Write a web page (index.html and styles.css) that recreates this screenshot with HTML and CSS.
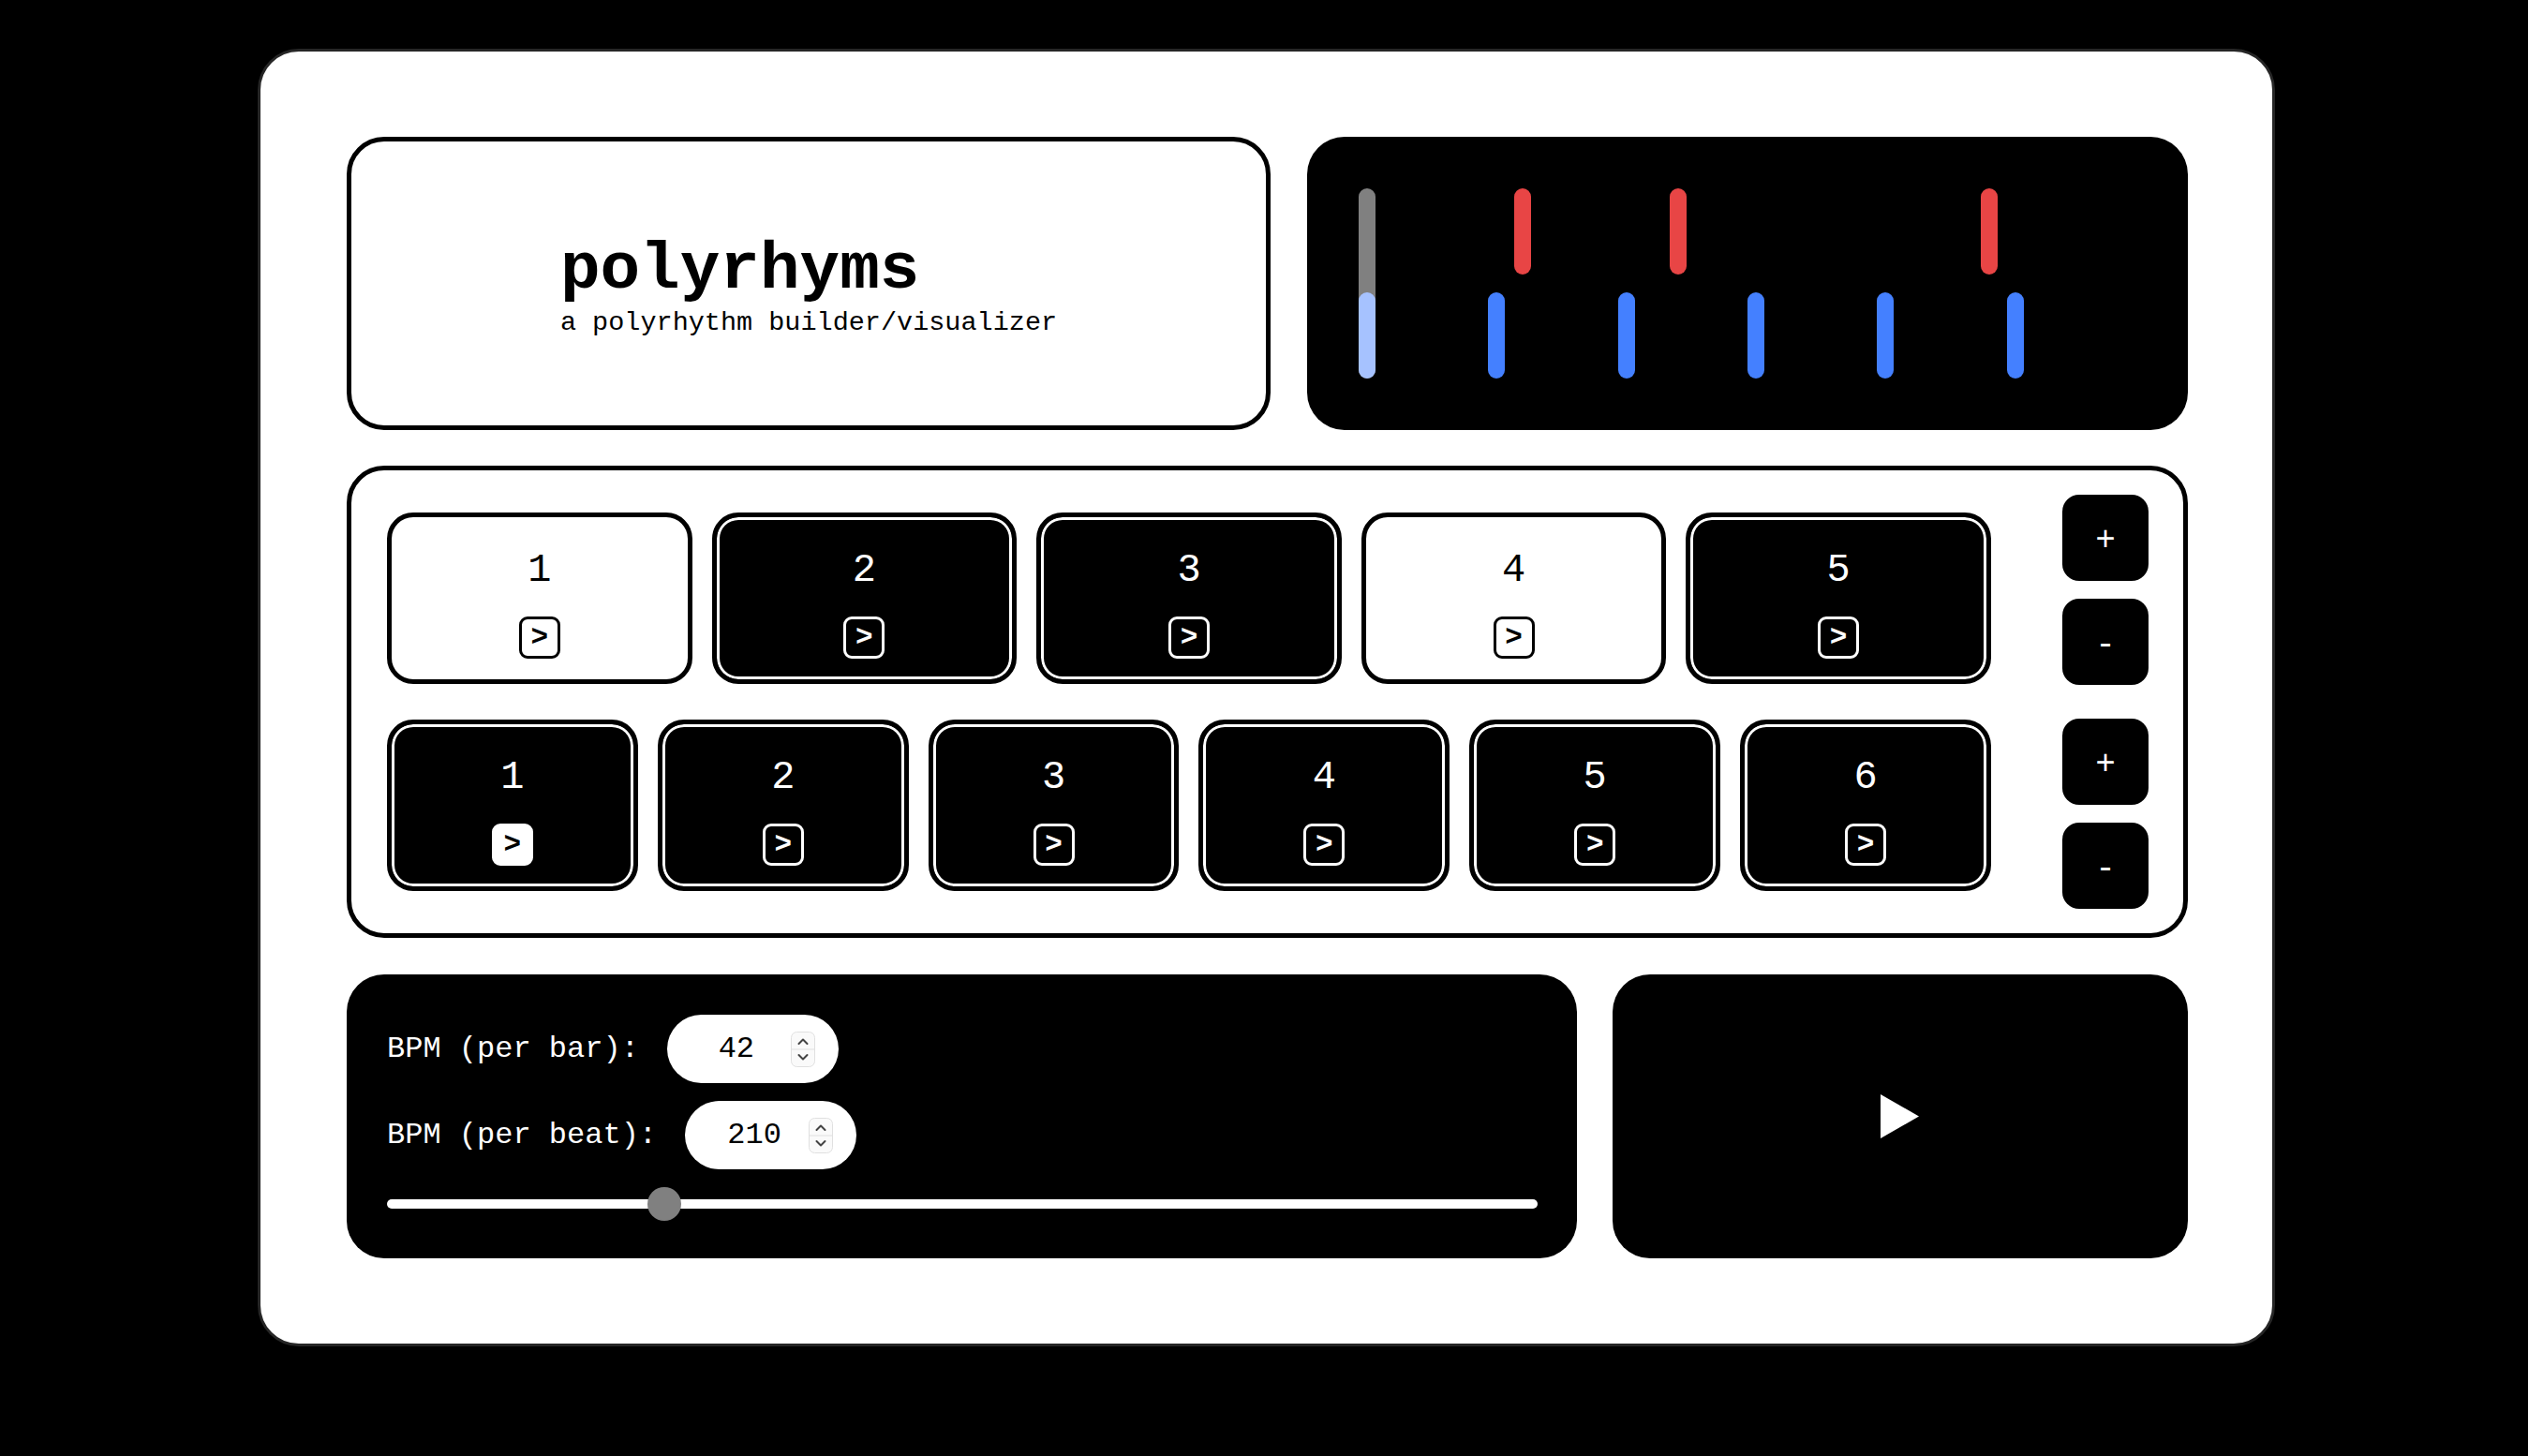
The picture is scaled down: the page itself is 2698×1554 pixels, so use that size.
FILE: index.html
```html
<!DOCTYPE html>
<html lang="en">
<head>
    <meta charset="UTF-8">
    <meta name="viewport" content="width=device-width, initial-scale=1.0">
    <title>polyrhyms</title>
    <link rel="stylesheet" href="styles.css">
</head>
<body>
    <div class="app">
        <!-- Title + visualizer -->
        <div class="top-row">
            <div class="header">
                <div class="header-text">
                    <h1 class="title">polyrhyms</h1>
                    <div class="subtitle">a polyrhythm builder/visualizer</div>
                </div>
            </div>

            <div class="visualizer">
                <div class="playhead"></div>
                <div class="track">
                    <div class="beat"></div>
                    <div class="beat"><div class="bar red"></div></div>
                    <div class="beat"><div class="bar red"></div></div>
                    <div class="beat"></div>
                    <div class="beat"><div class="bar red"></div></div>
                </div>
                <div class="track">
                    <div class="beat"><div class="bar blue current"></div></div>
                    <div class="beat"><div class="bar blue"></div></div>
                    <div class="beat"><div class="bar blue"></div></div>
                    <div class="beat"><div class="bar blue"></div></div>
                    <div class="beat"><div class="bar blue"></div></div>
                    <div class="beat"><div class="bar blue"></div></div>
                </div>
            </div>
        </div>

        <!-- Step sequencer -->
        <div class="sequencer">
            <div class="steps">
                <div class="step-row">
                    <div class="step"><span class="step-num">1</span><button class="step-go">&gt;</button></div>
                    <div class="step on"><span class="step-num">2</span><button class="step-go">&gt;</button></div>
                    <div class="step on"><span class="step-num">3</span><button class="step-go">&gt;</button></div>
                    <div class="step"><span class="step-num">4</span><button class="step-go">&gt;</button></div>
                    <div class="step on"><span class="step-num">5</span><button class="step-go">&gt;</button></div>
                </div>
                <div class="step-row">
                    <div class="step on"><span class="step-num">1</span><button class="step-go current">&gt;</button></div>
                    <div class="step on"><span class="step-num">2</span><button class="step-go">&gt;</button></div>
                    <div class="step on"><span class="step-num">3</span><button class="step-go">&gt;</button></div>
                    <div class="step on"><span class="step-num">4</span><button class="step-go">&gt;</button></div>
                    <div class="step on"><span class="step-num">5</span><button class="step-go">&gt;</button></div>
                    <div class="step on"><span class="step-num">6</span><button class="step-go">&gt;</button></div>
                </div>
            </div>
            <div class="counts">
                <div class="count-group">
                    <button class="count-btn">+</button>
                    <button class="count-btn">-</button>
                </div>
                <div class="count-group">
                    <button class="count-btn">+</button>
                    <button class="count-btn">-</button>
                </div>
            </div>
        </div>

        <!-- Tempo + play -->
        <div class="bottom-row">
            <div class="bpm">
                <label class="bpm-row">BPM (per bar):
                    <span class="number">
                        <input type="number" value="42">
                        <svg class="spinner" width="26" height="38" viewBox="0 0 26 38">
                            <rect x="0.5" y="0.5" width="25" height="37" rx="6" fill="#fafafa" stroke="#e0e0e0"/>
                            <line x1="1" y1="19" x2="25" y2="19" stroke="#e0e0e0"/>
                            <polyline points="8.5,13 13,8.5 17.5,13" fill="none" stroke="#444" stroke-width="2" stroke-linecap="round" stroke-linejoin="round"/>
                            <polyline points="8.5,25 13,29.5 17.5,25" fill="none" stroke="#444" stroke-width="2" stroke-linecap="round" stroke-linejoin="round"/>
                        </svg>
                    </span>
                </label>
                <label class="bpm-row">BPM (per beat):
                    <span class="number">
                        <input type="number" value="210">
                        <svg class="spinner" width="26" height="38" viewBox="0 0 26 38">
                            <rect x="0.5" y="0.5" width="25" height="37" rx="6" fill="#fafafa" stroke="#e0e0e0"/>
                            <line x1="1" y1="19" x2="25" y2="19" stroke="#e0e0e0"/>
                            <polyline points="8.5,13 13,8.5 17.5,13" fill="none" stroke="#444" stroke-width="2" stroke-linecap="round" stroke-linejoin="round"/>
                            <polyline points="8.5,25 13,29.5 17.5,25" fill="none" stroke="#444" stroke-width="2" stroke-linecap="round" stroke-linejoin="round"/>
                        </svg>
                    </span>
                </label>
                <input type="range" class="tempo" min="0" max="180" value="42">
            </div>

            <button class="play">
                <svg width="42" height="47" viewBox="0 0 42 47">
                    <polygon points="0,0 41,23.5 0,47" fill="#fff"/>
                </svg>
            </button>
        </div>
    </div>
</body>
</html>
```

FILE: styles.css
```css
* {
    margin: 0;
    padding: 0;
    box-sizing: border-box;
}

body {
    background-color: #000;
    font-family: "Liberation Mono", "DejaVu Sans Mono", monospace;
}

button {
    font-family: inherit;
    border: none;
    background: none;
    color: inherit;
    cursor: pointer;
}

.app {
    width: 2153px;
    margin: 52px 0 0 275px;
    background-color: #fff;
    border: 3px solid #262626;
    border-radius: 44px;
    padding: 91px 90px 91px 92px;
    display: flex;
    flex-direction: column;
    gap: 39px;
}

/* Top row */
.top-row {
    display: grid;
    grid-template-columns: 986fr 940fr;
    gap: 39px;
    height: 312px;
}

.header {
    border: 5px solid #000;
    border-radius: 40px;
    display: flex;
    align-items: center;
    justify-content: center;
}

.header-text {
    padding-top: 10px;
}

.title {
    font-size: 71px;
    font-weight: bold;
    line-height: 1;
}

.subtitle {
    font-size: 28.5px;
    line-height: 1.2;
    margin-top: 4px;
}

.visualizer {
    background-color: #000;
    border-radius: 40px;
    padding: 55px;
    display: flex;
    flex-direction: column;
    gap: 19px;
    position: relative;
}

.playhead {
    position: absolute;
    left: 55px;
    top: 55px;
    bottom: 55px;
    width: 18px;
    border-radius: 9px;
    background-color: #808080;
}

.track {
    display: flex;
    height: 92px;
}

.beat {
    flex: 1;
}

.bar {
    position: relative;
    width: 18px;
    height: 100%;
    border-radius: 9px;
}

.bar.red {
    background-color: #e84545;
}

.bar.blue {
    background-color: #4480ff;
}

.bar.blue.current {
    background-color: #a6c2ff;
}

/* Sequencer */
.sequencer {
    border: 5px solid #000;
    border-radius: 40px;
    padding: 26px 37px 26px 38px;
    display: flex;
    align-items: center;
    gap: 76px;
}

.steps {
    flex: 1;
    display: flex;
    flex-direction: column;
    gap: 38px;
}

.step-row {
    display: flex;
    gap: 21px;
}

.step {
    flex: 1;
    height: 183px;
    border: 5px solid #000;
    border-radius: 28px;
    background-color: #fff;
    color: #000;
    display: flex;
    flex-direction: column;
    align-items: center;
    padding-top: 33px;
    gap: 25px;
}

.step.on {
    background-color: #000;
    color: #fff;
    box-shadow: inset 0 0 0 3px #fff;
}

.step-num {
    font-size: 42px;
    line-height: 48px;
}

.step-go {
    width: 44px;
    height: 45px;
    border: 3px solid currentColor;
    border-radius: 9px;
    display: flex;
    align-items: center;
    justify-content: center;
    font-size: 31px;
    font-weight: bold;
    line-height: 1;
}

.step-go.current {
    background-color: #fff;
    border-color: #fff;
    color: #000;
}

.counts {
    display: flex;
    flex-direction: column;
    gap: 36px;
}

.count-group {
    display: flex;
    flex-direction: column;
    gap: 19px;
}

.count-btn {
    width: 92px;
    height: 92px;
    border-radius: 18px;
    background-color: #000;
    color: #fff;
    font-size: 36px;
    padding-top: 7px;
}

/* Bottom row */
.bottom-row {
    display: grid;
    grid-template-columns: 1313fr 614fr;
    gap: 38px;
}

.bpm {
    background-color: #000;
    border-radius: 40px;
    padding: 43px 42px 53px 43px;
    color: #fff;
    display: flex;
    flex-direction: column;
    gap: 19px;
}

.bpm-row {
    display: flex;
    align-items: center;
    gap: 30px;
    font-size: 32px;
}

.number {
    display: flex;
    align-items: center;
    width: 183px;
    height: 73px;
    background-color: #fff;
    border-radius: 37px;
    padding: 0 25px 0 16px;
}

.number input {
    width: 116px;
    border: none;
    outline: none;
    background: none;
    font-family: inherit;
    font-size: 32px;
    color: #000;
    text-align: center;
    -moz-appearance: textfield;
}

.number input::-webkit-inner-spin-button,
.number input::-webkit-outer-spin-button {
    -webkit-appearance: none;
    margin: 0;
}

.tempo {
    -webkit-appearance: none;
    appearance: none;
    width: 100%;
    height: 10px;
    margin-top: 13px;
    background-color: #fff;
    border-radius: 5px;
    outline: none;
}

.tempo::-webkit-slider-thumb {
    -webkit-appearance: none;
    width: 36px;
    height: 36px;
    border-radius: 50%;
    background-color: #808080;
}

.play {
    background-color: #000;
    border-radius: 40px;
    display: flex;
    align-items: center;
    justify-content: center;
}
```
